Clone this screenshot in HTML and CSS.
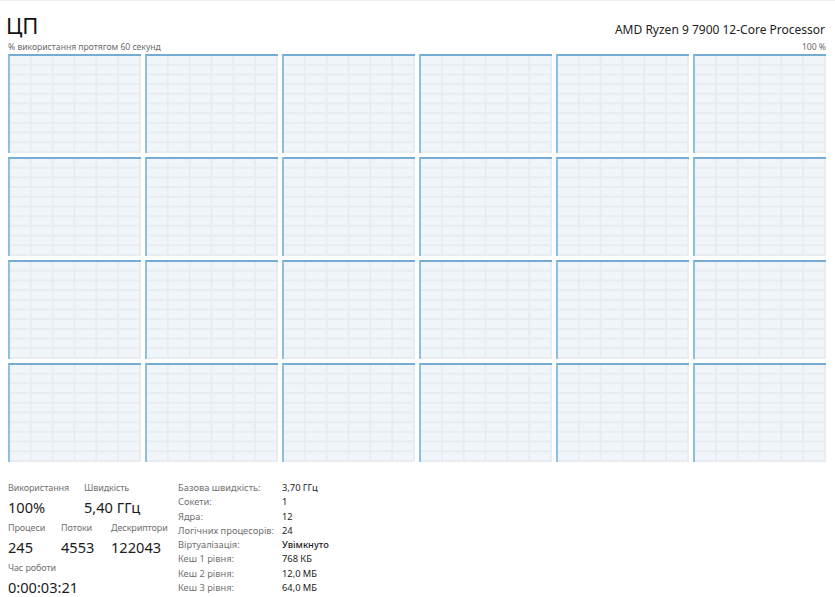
FILE: index.html
```html
<!DOCTYPE html>
<html lang="uk">
<head>
<meta charset="utf-8">
<title>ЦП</title>
<link rel="stylesheet" href="styles.css">
</head>
<body>
<div class="page">
  <header class="head">
    <h1 class="title">ЦП</h1>
    <div class="cpu-name">AMD Ryzen 9 7900 12-Core Processor</div>
  </header>
  <div class="caption">
    <span>% використання протягом 60 секунд</span>
    <span>100 %</span>
  </div>
  <div class="graphs">
    <div class="graph"></div><div class="graph"></div><div class="graph"></div><div class="graph"></div><div class="graph"></div><div class="graph"></div>
    <div class="graph"></div><div class="graph"></div><div class="graph"></div><div class="graph"></div><div class="graph"></div><div class="graph"></div>
    <div class="graph"></div><div class="graph"></div><div class="graph"></div><div class="graph"></div><div class="graph"></div><div class="graph"></div>
    <div class="graph"></div><div class="graph"></div><div class="graph"></div><div class="graph"></div><div class="graph"></div><div class="graph"></div>
  </div>
  <section class="details">
    <div class="stats">
      <div class="stat-row">
        <div class="stat w76"><div class="label">Використання</div><div class="value">100%</div></div>
        <div class="stat"><div class="label">Швидкість</div><div class="value">5,40 ГГц</div></div>
      </div>
      <div class="stat-row">
        <div class="stat w53"><div class="label">Процеси</div><div class="value">245</div></div>
        <div class="stat w50"><div class="label">Потоки</div><div class="value">4553</div></div>
        <div class="stat"><div class="label">Дескриптори</div><div class="value">122043</div></div>
      </div>
      <div class="stat-row">
        <div class="stat"><div class="label">Час роботи</div><div class="value">0:00:03:21</div></div>
      </div>
    </div>
    <dl class="props">
      <dt>Базова швидкість:</dt><dd>3,70 ГГц</dd>
      <dt>Сокети:</dt><dd>1</dd>
      <dt>Ядра:</dt><dd>12</dd>
      <dt>Логічних процесорів:</dt><dd>24</dd>
      <dt>Віртуалізація:</dt><dd class="strong">Увімкнуто</dd>
      <dt>Кеш 1 рівня:</dt><dd>768 КБ</dd>
      <dt>Кеш 2 рівня:</dt><dd>12,0 МБ</dd>
      <dt>Кеш 3 рівня:</dt><dd>64,0 МБ</dd>
    </dl>
  </section>
</div>
</body>
</html>
```

FILE: styles.css
```css
html, body {
  margin: 0;
  padding: 0;
  background: #ffffff;
}

body {
  font-family: "Noto Sans", "Open Sans", sans-serif;
  color: #1b1b1b;
}

.page {
  width: 835px;
  height: 597px;
  border-top: 1px solid #efefef;
  box-sizing: border-box;
  overflow: hidden;
}

.head {
  display: flex;
  justify-content: space-between;
  align-items: baseline;
  padding: 9px 10px 0 6px;
  height: 31px;
}

.title {
  margin: 0;
  font-size: 22px;
  font-weight: 400;
  line-height: 30px;
  color: #111;
}

.cpu-name {
  font-size: 12px;
  line-height: 30px;
  color: #222;
}

.caption {
  display: flex;
  justify-content: space-between;
  padding: 0 9px 0 8px;
  margin-bottom: 1px;
  font-size: 8.6px;
  line-height: 12px;
  color: #6b6b6b;
}

.graphs {
  display: grid;
  grid-template-columns: repeat(6, 1fr);
  grid-template-rows: repeat(4, 99px);
  gap: 4px;
  padding: 0 9px 0 8px;
}

.graph {
  border-top: 2px solid #74acd3;
  border-left: 2px solid #8dbfdf;
  background-color: #f0f5f9;
  background-image:
    linear-gradient(to right, transparent calc(100% - 2px), #e8ecf0 calc(100% - 2px)),
    linear-gradient(to bottom, transparent calc(100% - 2px), #e8ecf0 calc(100% - 2px));
  background-size: calc(100% / 6) 100%, 100% calc(100% / 10);
}

.details {
  display: flex;
  padding: 19px 0 0 8px;
}

.stats {
  width: 170px;
  display: flex;
  flex-direction: column;
  gap: 4px;
}

.stat-row {
  display: flex;
}

.w76 { width: 76px; }
.w53 { width: 53px; }
.w50 { width: 50px; }

.label {
  font-size: 9px;
  line-height: 14px;
  letter-spacing: -0.1px;
  color: #707070;
  white-space: nowrap;
}

.value {
  margin-top: 2px;
  font-size: 14.6px;
  line-height: 20px;
  color: #1b1b1b;
  white-space: nowrap;
}

.props {
  margin: 0;
  display: grid;
  grid-template-columns: 104px auto;
  grid-auto-rows: 14.3px;
  font-size: 9.3px;
  line-height: 14.3px;
}

.props dt {
  color: #707070;
  white-space: nowrap;
}

.props dd {
  margin: 0;
  color: #1b1b1b;
  white-space: nowrap;
}

.props dd.strong {
  font-weight: 500;
}
```
